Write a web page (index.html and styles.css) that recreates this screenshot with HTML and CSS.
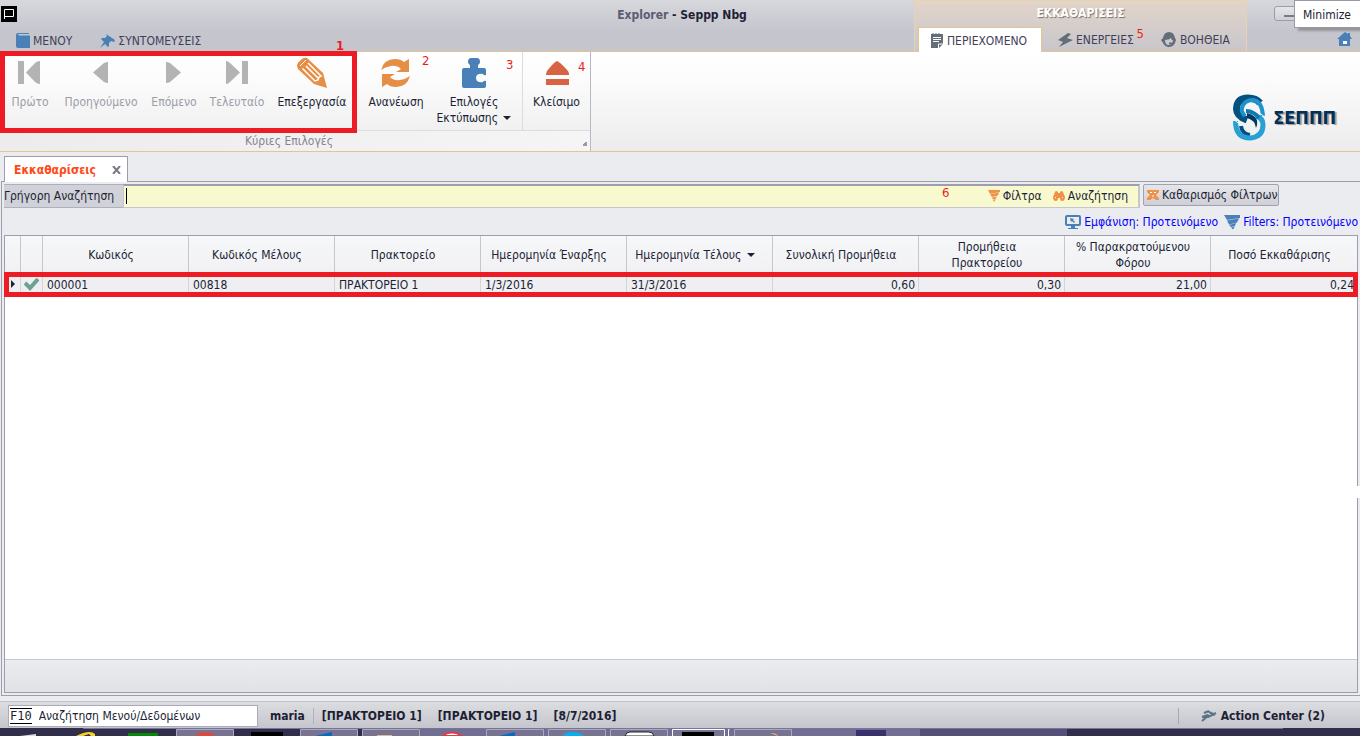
FILE: index.html
```html
<!DOCTYPE html>
<html lang="el">
<head>
<meta charset="utf-8">
<title>Explorer - Seppp Nbg</title>
<link rel="stylesheet" href="styles.css">
</head>
<body>
<header class="titlebar">
  <svg class="app-icon" width="16" height="16" viewBox="0 0 16 16"><path d="M0 0h16v16H0z"/><path d="M3.500 13V3.500h9v7H3.500" fill="none" stroke="#fff"/></svg>
  <h1 class="title"><span>Explorer</span> - <b>Seppp Nbg</b></h1>
  <nav class="main-tabs">
    <button class="tab"><svg width="14" height="16" viewBox="0 0 14 16"><path d="M2 0h11v1H3Q1 1.500 3 2.500h11V15H2Q0 15 0 13V2Q0 0 2 0z" fill="#4a80b8"/></svg>ΜΕΝΟΥ</button>
    <button class="tab"><svg width="15" height="16" viewBox="0 0 15 16"><path d="M6 1l9 6-1 2-3-1-2 2v3l-1 1-3-3-5 4 4-6-3-3 1-1h3l2-2z" fill="#4a80b8"/></svg>ΣΥΝΤΟΜΕΥΣΕΙΣ</button>
  </nav>
  <div class="context">
    <div class="context-title">ΕΚΚΑΘΑΡΙΣΕΙΣ</div>
    <nav class="context-tabs">
      <button class="tab tab-active"><svg width="14" height="16" viewBox="0 0 14 16"><path d="M1 1h1l1-1 1 1h1l1-1 1 1h1l1-1 1 1h3v10l-4 4H1z" fill="#646e78"/><path d="M3 4.500h8M3 6.500h8M3 8.500h6M8.500 15v-4H13" stroke="#fff" fill="none"/></svg>ΠΕΡΙΕΧΟΜΕΝΟ</button>
      <button class="tab tab-actions"><svg width="16" height="16" viewBox="0 0 16 16"><path d="M11 1L1 8l5 2-4 5 14-7-6-2 4-4z" fill="#646e78"/></svg>ΕΝΕΡΓΕΙΕΣ<span class="note note-5">5</span></button>
      <button class="tab tab-help"><svg width="16" height="16" viewBox="0 0 16 16"><path d="M8 0Q13 0 14 6l1 2-1 3q-2 4-6 4t-6-4L0 8l2-2Q3 0 8 0z" fill="#646e78"/><path d="M4 8q4 0 6-2 1 3 2 2 0 5-4 5-4 0-4-5z" fill="#ccc9cc"/><path d="M8 11.500h5" stroke="#646e78" stroke-width="2"/></svg>ΒΟΗΘΕΙΑ</button>
    </nav>
  </div>
  <div class="window-tools">
    <button class="minimize" aria-label="Minimize"></button>
    <button class="home" aria-label="Home"><svg width="16" height="14" viewBox="0 0 16 14"><path d="M8 0L0 7h2v7h11V7h2l-2-3V1h-2v1z" fill="#4a80b8"/><path d="M6 9h4v3H6z" fill="#fff"/></svg></button>
  </div>
  <div class="tooltip">Minimize</div>
</header>

<section class="ribbon">
  <div class="group">
    <div class="commands">
      <button class="cmd cmd-first" disabled><svg width="32" height="32" viewBox="0 0 32 32"><path d="M4 5h6v23H4zM26 5v23q-3 0-5-2l-9-9.500L21 7q2-2 5-2z" fill="#b3b3b3"/></svg>Πρώτο</button>
      <button class="cmd cmd-prev" disabled><svg width="32" height="32" viewBox="0 0 32 32"><path d="M23 6v21q-2 0-4-1L8 16.500 19 7q2-1 4-1z" fill="#b3b3b3"/></svg>Προηγούμενο</button>
      <button class="cmd cmd-next" disabled><svg width="32" height="32" viewBox="0 0 32 32"><path d="M8 6v21q2 0 4-1l11-9.500L12 7q-2-1-4-1z" fill="#b3b3b3"/></svg>Επόμενο</button>
      <button class="cmd cmd-last" disabled><svg width="32" height="32" viewBox="0 0 32 32"><path d="M5 5v23q2 0 4-2l10-9.500L9 7Q7 5 5 5zM21 5h6v23h-6z" fill="#b3b3b3"/></svg>Τελευταίο</button>
      <button class="cmd cmd-edit"><svg width="32" height="32" viewBox="0 0 32 32"><path d="M1 9Q1 7 6 3q3-2 5-1l16 15 4 15-13-4L2 13Q1 11 1 9z" fill="#e58e45"/><path d="M4 10l6-6" stroke="#fff" fill="none"/><path d="M6.500 12.500L19 25l3-1 1-3 2-1L12 7M10 10l12 12" stroke="#fff" stroke-width="1.500" fill="none"/></svg>Επεξεργασία</button>
      <button class="cmd cmd-refresh"><svg width="32" height="32" viewBox="0 0 32 32" fill="#e58e45"><path d="M1 14Q4 3 15 3q6 0 9 3l5-3v13H16l5-3q-4-4-10-3-6 1-10 4z"/><path transform="rotate(180 15.500 17)" d="M1 14Q4 3 15 3q6 0 9 3l5-3v13H16l5-3q-4-4-10-3-6 1-10 4z"/></svg>Ανανέωση</button>
      <button class="cmd cmd-print"><svg width="32" height="32" viewBox="0 0 32 32"><path d="M13 2h6q3 0 3 4 0 2-2 3v3h6q2 0 2 2v5q-2 1-3-1-3-1-6 1-2 3 0 6 3 2 6 1 1-2 3-1v5q0 2-2 2H6q-2 0-2-2V14q0-2 2-2h6V9q-2-1-2-3 0-4 3-4z" fill="#4a80b8"/></svg>Επιλογές<span>Εκτύπωσης <i class="arrow"></i></span></button>
      <button class="cmd cmd-close"><svg width="32" height="32" viewBox="0 0 32 32"><path d="M16 5q2 0 11 10 1 2 1 3v1H5v-1l1-3Q14 5 16 5zM5 23h23v6H5z" fill="#d76344"/></svg>Κλείσιμο</button>
    </div>
    <div class="group-name">Κύριες Επιλογές</div>
    <span class="note note-1">1</span><span class="note note-2">2</span><span class="note note-3">3</span><span class="note note-4">4</span>
    <div class="frame frame-ribbon"></div>
  </div>
  <div class="brand">
    <svg width="34" height="48" viewBox="0 0 34 48" fill="none">
      <path d="M14 26Q3.500 22 3.500 15 4 4 15 4q8 0 12 5" stroke="#04507f" stroke-width="7"/>
      <path d="M12 22q-4-4-3-8 2-8 11-8 9 1 10 16" stroke="#1d93cc" stroke-width="4"/>
      <path d="M8 32q1 8 9 9" stroke="#04507f" stroke-width="4"/>
      <path d="M2.500 27q0 17 14.500 17 13-1 13-13 0-7-7-9" stroke="#27a1d5" stroke-width="5"/>
      <path d="M13 17q8 0 13 7" stroke="#0f79b4" stroke-width="4"/>
      <path d="M14 19v5q8 2 9 10 3-6-1-11-3-3-8-4z" fill="#023a63"/>
      <path d="M0 25q6 6 13 7M20 16q8 3 13 8" stroke="#f3f3f4" stroke-width="1"/>
    </svg>
    <span>ΣΕΠΠΠ</span>
  </div>
</section>

<main class="workspace">
  <div class="doc-tabs"><button class="doc-tab">Εκκαθαρίσεις <svg width="9" height="8" viewBox="0 0 9 8"><path d="M1 0l7 8M8 0L1 8" stroke="#777b89" stroke-width="2"/></svg></button></div>
  <div class="page">
    <div class="search">
      <label class="search-label" for="quick">Γρήγορη Αναζήτηση</label>
      <div class="search-box">
        <input id="quick" type="text"><span class="caret"></span>
        <button class="plain"><svg width="12" height="12" viewBox="0 0 12 12"><path d="M0 0h12v2L2 4zM2 4.500l9-2-1 3-6 1.500zM4 7.500l5-1-1 2-3 1zM5 10l3-1-2 3z" fill="#f0914a"/></svg>Φίλτρα</button>
        <button class="plain"><svg width="12" height="12" viewBox="0 0 12 12"><path d="M2 2q1-2 3 0v1h2V2q2-2 3 0l2 5q0 4-3 4Q7 11 7 8H5q0 3-2 3-3 0-3-4z" fill="#f0914a"/><path d="M2.500 7v1M9.500 7v1" stroke="#f9f9cf"/></svg>Αναζήτηση</button>
        <span class="note note-6">6</span>
      </div>
      <button class="clear"><svg width="12" height="12" viewBox="0 0 12 12"><path d="M0 1h12v2L9 6l3 3v2H9L6 9l-3 2H0V9l3-3-3-3z" fill="#f0914a"/><path d="M3 3.500h2M7 3.500h2M5 7h2" stroke="#fff"/></svg>Καθαρισμός Φίλτρων</button>
    </div>
    <div class="views">
      <a href="#"><svg width="16" height="16" viewBox="0 0 16 16"><rect x="1" y="2" width="14" height="9" rx="1" fill="none" stroke="#4a80b8" stroke-width="2"/><path d="M5 4l4 1-1 1 2 2-1 1-2-2-1 1zM6 12h4v2h3v1H3v-1h3z" fill="#4a80b8"/></svg>Εμφάνιση: Προτεινόμενο</a>
      <a href="#"><svg width="16" height="16" viewBox="0 0 16 16"><path d="M0 1h16v3L3 6zM3 6.500l12-2-2 4-8 2zM5 11l7-2-1 3-4 1zM7 13.500l4-1-2 3z" fill="#4a80b8"/></svg>Filters: Προτεινόμενο</a>
    </div>
    <div class="grid">
      <table>
        <colgroup><col class="c-mark"><col class="c-check"><col span="9"></colgroup>
        <thead><tr><th></th><th></th><th>Κωδικός</th><th>Κωδικός Μέλους</th><th>Πρακτορείο</th><th>Ημερομηνία Έναρξης</th><th>Ημερομηνία Τέλους <i class="arrow"></i></th><th>Συνολική Προμήθεια</th><th>Προμήθεια<br>Πρακτορείου</th><th>% Παρακρατούμενου<br>Φόρου</th><th>Ποσό Εκκαθάρισης</th></tr></thead>
        <tbody><tr><td class="mark"><i></i></td><td class="check"><svg width="15" height="13" viewBox="0 0 15 13"><path d="M1 5l5 5 8-9" fill="none" stroke="#6fa191" stroke-width="4"/></svg></td><td>000001</td><td>00818</td><td>ΠΡΑΚΤΟΡΕΙΟ 1</td><td>1/3/2016</td><td>31/3/2016</td><td class="num">0,60</td><td class="num">0,30</td><td class="num">21,00</td><td class="num">0,24</td></tr></tbody>
      </table>
      <div class="grid-space"></div>
      <div class="grid-footer"></div>
      <div class="frame frame-row"></div>
      <div class="edge-gap"></div>
    </div>
  </div>
</main>

<footer class="status">
  <label class="command"><kbd>F10</kbd><input type="text" value="Αναζήτηση Μενού/Δεδομένων"></label>
  <b class="user">maria</b>
  <b>[ΠΡΑΚΤΟΡΕΙΟ 1]</b><b>[ΠΡΑΚΤΟΡΕΙΟ 1]</b><b>[8/7/2016]</b>
  <button class="center"><svg width="16" height="14" viewBox="0 0 16 14"><path d="M1 12l7-6M3 4l5-2M1 8l6-2M7 8l8-4M8 3l6 3" stroke="#5d7185" stroke-width="2"/></svg>Action Center (2)</button>
</footer>
<div class="taskbar">
  <svg width="1360" height="8" viewBox="0 0 1360 8"><path d="M83 .500h1200" stroke="#77739b"/><path d="M420 1h647v7H420z" fill="#716e93"/><path d="M856 2h30v6h-30z" fill="#37316c"/><path d="M920 1h147v7H920z" fill="#545078"/>
    <g fill="#777390" stroke="#aaa8bd"><path d="M176.500 8V1.500h57V8M300.500 8V1.500h57V8M362.500 8V1.500h57V8M486.500 8V1.500h57V8M548.500 8V1.500h57V8M610.500 8V1.500h57V8"/><path d="M672.500 8V1.500h52V8M728.500 8V1.500h1" stroke="#fff"/><path d="M734.500 8V1.500h57V8"/></g>
    <path d="M20 8l16-2v2z" fill="#ddd"/><path d="M76 8q14-7 19-2v2h-4l-2-2-6 2z" fill="#f7d329"/><path d="M128 5h30v3h-30z" fill="#048a05"/><path d="M194 8q11-8 22 0z" fill="#da4b3e"/><path d="M251 4h32v4h-32zM682 4h32v4h-32z"/><path d="M315 8l17-4v4zM499 8l16-4v4z" fill="#086ac2"/><path d="M377 7h15v1h-15z" fill="#d9c184"/><path d="M442 8q10-7 20 0z" fill="#fff" stroke="#dd3c4b" stroke-width="2"/><path d="M563 8q2-4 9-4t12 4z" fill="#08aeed"/><path d="M625 8q1-4 5-4h19q4 0 5 4z" fill="#fff" stroke="#222"/><path d="M770 5q7 0 8 3z" fill="#f1b66e"/></svg>
</div>
</body>
</html>
```

FILE: styles.css
```css
* { box-sizing: border-box; }
body { margin: 0; height: 100vh; display: flex; flex-direction: column; overflow: hidden; background: #ebecef; color: #201f35; font: 12px/16px "DejaVu Sans Condensed", "DejaVu Sans", sans-serif; }
button, input { margin: 0; padding: 0; border: 0; background: none; color: inherit; font: inherit; }
svg { flex: none; display: block; }

.titlebar { position: relative; display: grid; grid-template-columns: 1fr 333px 113px; grid-template-rows: 28px 23px; background: linear-gradient(#d7d8dc, #c5c5ce 60%); border-bottom: 1px solid #e3c593; }
.app-icon { grid-area: 1 / 1; margin: 6px 0 0 1px; }
.title { grid-area: 1 / 1 / 2 / 4; justify-self: center; margin: 0; padding: 7px 0 0 4px; font-size: 12px; font-weight: bold; line-height: 16px; }
.title span { color: #5d5b72; }
.main-tabs { grid-area: 2 / 1; display: flex; gap: 28px; padding: 2px 0 0 16px; }
.tab { position: relative; display: flex; align-items: center; gap: 3px; color: #423e58; white-space: nowrap; }
.context { grid-area: 1 / 2 / 3 / 3; display: flex; flex-direction: column; background: linear-gradient(#e2d5c9, #c8c6cc); border: solid #ead2ad; border-width: 1px 1px 0; }
.context-title { height: 26px; padding-top: 4px; text-align: center; color: #fff; font-weight: bold; text-shadow: 1px 1px 1px #777; }
.context-tabs { display: flex; flex: 1; padding-left: 3px; }
.context .tab { padding-top: 2px; }
.context .tab-active { width: 124px; padding: 1px 0 0 11px; background: #fff; border: solid #e3c593; border-width: 1px 1px 0; margin-bottom: -1px; }
.tab-actions { margin-left: 15px; }
.tab-help { margin-left: 27px; }
.window-tools { grid-area: 1 / 3 / 3 / 4; display: flex; flex-direction: column; justify-content: space-between; }
.minimize { position: relative; width: 40px; height: 15px; margin: 6px 0 0 27px; border: 1px solid #9b9ca9; border-radius: 3px; background: linear-gradient(#e5e6e9, #cfcfd6); }
.minimize::after { content: ""; position: absolute; left: 9px; top: 8px; width: 10px; height: 2px; background: #777b89; }
.home { align-self: flex-end; margin: 0 7px 5px 0; }
.tooltip { position: absolute; top: 0; right: 0; width: 66px; height: 28px; padding: 6px 0 0 8px; background: #fff; border: 1px solid #9999a5; border-right: 0; box-shadow: 4px 3px 2px #7779; z-index: 4; }

.ribbon { display: flex; justify-content: space-between; background: linear-gradient(#fff, #fbfbfb 30%, #ececec); border-bottom: 1px solid #e3c593; }
.group { position: relative; width: 591px; border-right: 1px solid #b7b8c1; display: flex; flex-direction: column; }
.group::after { content: ""; position: absolute; right: 3px; bottom: 5px; width: 5px; height: 5px; background: linear-gradient(135deg, transparent 50%, #999ba6 50%); }
.commands { display: flex; height: 79px; padding-left: 5px; border-bottom: 1px solid #dddde0; }
.cmd { display: flex; flex-direction: column; align-items: center; padding-top: 4px; white-space: nowrap; }
.cmd svg { margin-bottom: 6px; }
.cmd:disabled { color: #9c9ca8; }
.cmd-first { width: 50px; }
.cmd-prev { width: 92px; }
.cmd-next { width: 54px; }
.cmd-last { width: 72px; }
.cmd-edit { width: 78px; margin-right: 9px; }
.cmd-refresh { width: 72px; }
.cmd-print { width: 84px; }
.cmd-close { width: 68px; margin-left: 6px; border-left: 1px solid #dcdce0; }
.arrow { display: inline-block; margin-left: 2px; vertical-align: 2px; border: solid transparent; border-width: 4px 4px 0; border-top-color: #201f35; }
.group-name { height: 20px; padding: 2px 12px 0 0; color: #84848f; text-align: center; background: linear-gradient(90deg, #ececec, #f5f5f5); }
.brand { display: flex; align-items: center; gap: 6px; padding: 32px 24px 0 0; color: #002f58; font-size: 18px; font-weight: bold; text-shadow: 2px 1px 1px #999; }

.note { position: absolute; color: #ed1c24; font-size: 13px; line-height: 14px; }
.note-1 { left: 336px; top: -13px; font-weight: bold; }
.note-2 { left: 422px; top: 2px; }
.note-3 { left: 506px; top: 6px; }
.note-4 { left: 578px; top: 8px; }
.note-5 { right: -10px; top: 0; }
.note-6 { left: 818px; top: 0; }
.frame { position: absolute; border: 5px solid #ed1c24; pointer-events: none; z-index: 2; }
.frame-ribbon { left: 0; top: -1px; width: 357px; height: 82px; }
.frame-row { left: -1px; right: -1px; top: 36px; height: 25px; }

.workspace { flex: 1; min-height: 0; display: flex; flex-direction: column; padding: 4px 0 5px; }
.doc-tabs { padding-left: 4px; height: 25px; }
.doc-tab { position: relative; z-index: 1; display: flex; align-items: center; justify-content: space-between; width: 124px; height: 26px; padding: 0 6px 0 9px; background: #fff; border: 1px solid #9d9dae; border-bottom: 0; color: #ff4713; font-weight: bold; }
.page { flex: 1; display: flex; flex-direction: column; padding: 2px; border: solid #9d9dae; border-width: 1px 0 1px 1px; margin-left: 1px; }
.search { display: flex; height: 24px; }
.search-label { width: 119px; padding: 3px 0 0; background: #d1d2d9; border: solid #b0b0bc; border-width: 1px 0; white-space: nowrap; }
.search-box { position: relative; flex: 1; display: flex; align-items: center; gap: 11px; padding: 0 10px 2px 0; background: #f9f9cf; border: solid #c6c6ce; border-width: 2px 2px 1px 1px; border-top-color: #9d9dae; }
.search-box input { flex: 1; min-width: 0; outline: 0; }
.caret { position: absolute; left: 2px; top: 2px; width: 1px; height: 16px; background: #000; }
.plain, .clear { display: flex; align-items: center; gap: 3px; white-space: nowrap; }
.clear { width: 136px; height: 22px; margin: 0 79px 0 3px; padding-left: 3px; background: linear-gradient(#e6e6ea, #cfcfd6); border: 1px solid #a1a1b0; border-radius: 2px; }
.views { display: flex; justify-content: flex-end; align-items: center; gap: 6px; height: 27px; }
.views a { display: flex; align-items: center; gap: 3px; color: #00f; text-decoration: none; white-space: nowrap; }
.grid { position: relative; flex: 1; display: flex; flex-direction: column; background: #fff; border: 1px solid #9d9dae; }
table { width: 100%; table-layout: fixed; border-collapse: separate; border-spacing: 0; }
.c-mark { width: 16px; }
.c-check { width: 22px; }
th { height: 37px; padding: 0 9px 0 0; background: linear-gradient(#f6f7f8, #f1f1f4); border-right: 1px solid #c6c6ce; font-weight: normal; white-space: nowrap; }
td { height: 21px; padding: 2px 3px 0 4px; background: #efeff1; border-right: 1px solid #d4d4da; line-height: 16px; white-space: nowrap; overflow: hidden; }
th:last-child, td:last-child { border-right: 0; }
td.num { text-align: right; }
td.mark { padding: 0 0 0 6px; }
td.check { padding: 1px 0 0 3px; }
.mark i { display: block; width: 0; border: solid transparent; border-width: 4px 0 4px 4px; border-left-color: #201f35; }
.grid-space { flex: 1; }
.grid-footer { height: 33px; background: linear-gradient(#ebecef, #e1e2e6); border-top: 1px solid #c6c6ce; }
.edge-gap { position: absolute; right: -3px; top: 250px; width: 3px; height: 12px; background: #fff; }

.status { display: flex; align-items: center; gap: 16px; height: 27px; padding: 1px 35px 0 8px; background: linear-gradient(#dcdde0, #c5c5cd); border-top: 1px solid #c1c1ca; font-weight: bold; white-space: nowrap; }
.command { display: flex; align-items: center; gap: 7px; width: 250px; height: 22px; padding-left: 1px; margin-right: -4px; background: #fff; border: 1px solid #aaaab8; font-weight: normal; }
.command input { flex: 1; min-width: 0; }
.command kbd { border: solid #000; border-width: 1px 0; font: 12px/14px "DejaVu Sans Mono", monospace; }
.user { padding-right: 8px; margin-right: -8px; border-right: 1px solid #b0b0ba; }
.center { display: flex; align-items: center; gap: 4px; margin-left: auto; padding-left: 22px; border-left: 1px solid #a8a8b2; }
.taskbar { height: 8px; background: #312e4c; overflow: hidden; }
```
